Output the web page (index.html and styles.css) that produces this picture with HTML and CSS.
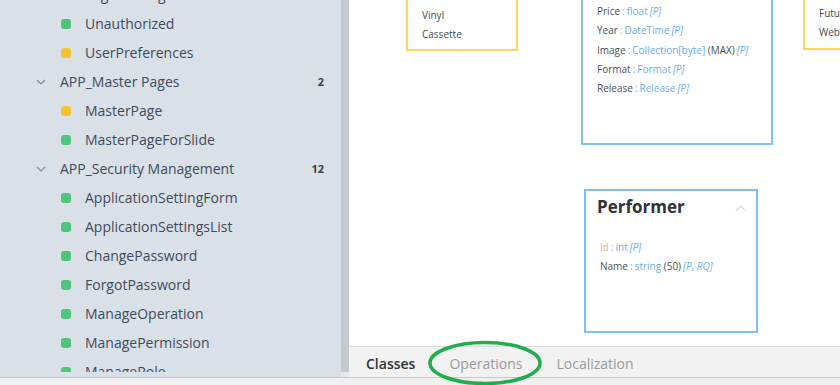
FILE: index.html
```html
<!DOCTYPE html>
<html>
<head>
<meta charset="utf-8">
<link rel="stylesheet" href="styles.css">
</head>
<body>
<div class="app">
  <div class="workspace">
    <aside class="sidebar">
      <div class="viewport">
        <ul class="tree">
          <li class="item"><span class="dot green"></span>LoginSettings</li>
          <li class="item"><span class="dot green"></span>Unauthorized</li>
          <li class="item"><span class="dot yellow"></span>UserPreferences</li>
          <li class="group"><svg class="chev" width="10" height="6" viewBox="0 0 10 6"><path d="M1 1 L5 5 L9 1" fill="none" stroke="#7d8898" stroke-width="1.2"/></svg><span class="glabel">APP_Master Pages</span><span class="count">2</span></li>
          <li class="item"><span class="dot yellow"></span>MasterPage</li>
          <li class="item"><span class="dot green"></span>MasterPageForSlide</li>
          <li class="group"><svg class="chev" width="10" height="6" viewBox="0 0 10 6"><path d="M1 1 L5 5 L9 1" fill="none" stroke="#7d8898" stroke-width="1.2"/></svg><span class="glabel">APP_Security Management</span><span class="count">12</span></li>
          <li class="item"><span class="dot green"></span>ApplicationSettingForm</li>
          <li class="item"><span class="dot green"></span>ApplicationSettingsList</li>
          <li class="item"><span class="dot green"></span>ChangePassword</li>
          <li class="item"><span class="dot green"></span>ForgotPassword</li>
          <li class="item"><span class="dot green"></span>ManageOperation</li>
          <li class="item"><span class="dot green"></span>ManagePermission</li>
          <li class="item"><span class="dot green"></span>ManageRole</li>
        </ul>
      </div>
    </aside>
    <div class="scrolltrack"><div class="thumb"></div></div>
    <main class="main">
      <section class="canvas">
        <div class="card enum card-format">
          <div class="row">Vinyl</div>
          <div class="row">Cassette</div>
        </div>
        <div class="card entity card-release">
          <div class="row"><span class="fname">Price</span><span class="sep">:</span><span class="type">float</span><span class="flags">[P]</span></div>
          <div class="row"><span class="fname">Year</span><span class="sep">:</span><span class="type">DateTime</span><span class="flags">[P]</span></div>
          <div class="row"><span class="fname">Image</span><span class="sep">:</span><span class="type">Collection[byte]</span> <span class="size">(MAX)</span><span class="flags">[P]</span></div>
          <div class="row"><span class="fname">Format</span><span class="sep">:</span><span class="type">Format</span><span class="flags">[P]</span></div>
          <div class="row"><span class="fname">Release</span><span class="sep">:</span><span class="type">Release</span><span class="flags">[P]</span></div>
        </div>
        <div class="card enum card-right">
          <div class="row">Future</div>
          <div class="row">Web</div>
        </div>
        <div class="card entity card-performer">
          <div class="card-head">
            <span class="title">Performer</span>
            <svg class="collapse" width="11" height="6" viewBox="0 0 11 6"><path d="M1 5.5 L5.5 1 L10 5.5" fill="none" stroke="#b5b9bf" stroke-width="1"/></svg>
          </div>
          <div class="fields">
            <div class="row"><span class="fname pk">Id</span><span class="sep">:</span><span class="type">int</span><span class="flags">[P]</span></div>
            <div class="row"><span class="fname">Name</span><span class="sep">:</span><span class="type">string</span> <span class="size">(50)</span><span class="flags">[P, RQ]</span></div>
          </div>
        </div>
      </section>
      <nav class="tabs">
        <span class="tab active">Classes</span>
        <span class="tab">Operations</span>
        <span class="tab">Localization</span>
      </nav>
    </main>
  </div>
  <div class="footer"></div>
  <svg class="annotation" width="120" height="50" viewBox="0 0 120 50"><ellipse cx="57" cy="23" rx="55" ry="20.5" fill="none" stroke="#1fae4b" stroke-width="3.5"/></svg>
</div>
</body>
</html>
```
FILE: styles.css
```css
* { box-sizing: border-box; }
html, body { margin: 0; padding: 0; }
body {
  font-family: "Open Sans", "Liberation Sans", sans-serif;
  background: #f0f0f0;
  overflow: hidden;
}
.app {
  position: relative;
  width: 840px;
  height: 385px;
  display: flex;
  flex-direction: column;
}
.workspace {
  display: flex;
  height: 377px;
}
.sidebar {
  width: 341px;
  background: #dae0e8;
}
.viewport {
  height: 372px;
  overflow: hidden;
}
.tree {
  list-style: none;
  margin: -20px 0 0 0;
  padding: 0 17px 0 0;
}
.tree li {
  height: 29px;
  line-height: 29px;
  font-size: 14px;
  color: #3f4b5b;
  display: flex;
  align-items: center;
  white-space: nowrap;
}
.item { padding-left: 61px; }
.dot {
  width: 10px;
  height: 10px;
  border-radius: 3px;
  margin-right: 14px;
  flex: none;
}
.dot.green { background: #4ec77c; }
.dot.yellow { background: #f5c232; }
.group { padding-left: 36px; }
.chev { margin-right: 14px; flex: none; }
.glabel { flex: 1; }
.count {
  font-size: 11px;
  font-weight: 700;
  color: #3a3f47;
}
.scrolltrack {
  width: 8px;
  background: #e4e8ee;
}
.thumb {
  height: 372px;
  background: #c4c9d2;
}
.main {
  flex: 1;
  display: flex;
  flex-direction: column;
  min-width: 0;
}
.canvas {
  position: relative;
  flex: 1;
  background: #ffffff;
  overflow: hidden;
}
.card {
  position: absolute;
  background: #ffffff;
  border: 2px solid;
  font-size: 10px;
  color: #444a52;
}
.enum { border-color: #ffd45c; }
.entity { border-color: #80bef3; }
.row {
  height: 19.3px;
  line-height: 19.3px;
  white-space: nowrap;
}
.card-format {
  left: 57px;
  top: -60px;
  width: 112px;
  height: 111px;
  padding: 64px 0 0 14px;
}
.card-release {
  left: 232px;
  top: -120px;
  width: 192px;
  height: 265px;
  padding: 120px 0 0 14px;
}
.card-right {
  left: 454px;
  top: -60px;
  width: 140px;
  height: 110px;
  padding: 62px 0 0 14px;
}
.card-performer {
  left: 235px;
  top: 189px;
  width: 174px;
  height: 144px;
  padding: 0 0 0 11px;
}
.card-head {
  display: flex;
  align-items: center;
  justify-content: space-between;
  height: 30px;
  padding-right: 10px;
}
.title {
  font-size: 17px;
  font-weight: 700;
  color: #2f3338;
}
.collapse { margin-top: 4px; }
.fields { padding-top: 17px; padding-left: 3px; }
.fname { color: #4a4f56; }
.fname.pk { color: #f6b57a; }
.sep { color: #6aaef0; margin: 0 2px; }
.type { color: #6aaef0; }
.size { color: #4a4f56; }
.flags { color: #6aaef0; font-style: italic; margin-left: 2px; }
.tabs {
  height: 31px;
  border-top: 1px solid #dcdcdc;
  background: #f2f2f2;
  display: flex;
  align-items: center;
  gap: 34px;
  padding-left: 17px;
  padding-top: 3px;
}
.tab {
  font-size: 14px;
  color: #9a9a9a;
}
.tab.active {
  color: #2f3338;
  font-weight: 600;
}
.footer {
  height: 8px;
  border-top: 1px solid #c9c9c9;
  background: #f0f0f0;
}
.annotation {
  position: absolute;
  left: 428px;
  top: 340px;
}
```
